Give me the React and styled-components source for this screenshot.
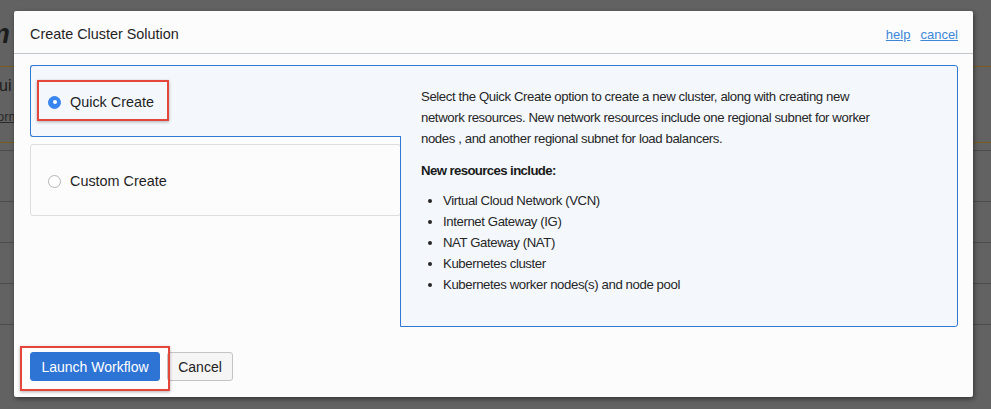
import React from "react";
import styled, { createGlobalStyle } from "styled-components";

const GlobalStyle = createGlobalStyle`
  html, body {
    margin: 0;
    padding: 0;
    background: #626262;
  }
  body {
    font-family: "Liberation Sans", Arial, Helvetica, sans-serif;
  }
`;

const Backdrop = styled.div`
  position: relative;
  width: 991px;
  height: 409px;
  overflow: hidden;
  background: #626262;
`;

/* the page underneath the overlay */
const PageTop = styled.div`
  height: 66px;
  border-bottom: 1px solid #7a5b1f;
  display: flex;
  align-items: center;
`;

const PageTitle = styled.span`
  margin-left: -15px;
  margin-top: 2px;
  font-size: 28px;
  font-weight: bold;
  font-style: italic;
  color: #1c1c1c;
`;

const PageIntro = styled.div`
  height: 76px;
  border-bottom: 1px solid #7a5b1f;
  display: flex;
  flex-direction: column;
  padding-top: 10px;
  box-sizing: border-box;
`;

const IntroHeading = styled.span`
  font-size: 16px;
  color: #1c1c1c;
  line-height: 18px;
  margin-left: -1px;
`;

const IntroLink = styled.span`
  margin-top: 14px;
  margin-left: -3px;
  font-size: 13px;
  color: #2a2a2a;
  text-decoration: underline;
`;

const PageRow = styled.div`
  height: ${({ $h }) => $h}px;
  border-bottom: 1px solid #4d4d4d;
`;

/* modal */
const Modal = styled.div`
  position: absolute;
  top: 11px;
  left: 14px;
  width: 959px;
  height: 386px;
  background: #fcfcfc;
  border-radius: 2px;
  box-shadow: 1px 2px 5px rgba(0, 0, 0, 0.45);
  display: flex;
  flex-direction: column;
`;

const Header = styled.div`
  height: 38px;
  border-bottom: 1px solid #c0c6cb;
  display: flex;
  align-items: center;
  justify-content: space-between;
  padding: 4px 15px 0 16px;
  box-sizing: content-box;
`;

const Title = styled.h2`
  margin: 0;
  font-size: 14.4px;
  font-weight: normal;
  color: #1f1f1f;
`;

const HeaderLinks = styled.div`
  display: flex;
  gap: 10px;
`;

const Link = styled.a`
  font-size: 13px;
  color: #3d86d8;
  text-decoration: underline;
  cursor: pointer;
`;

const Body = styled.div`
  display: flex;
  padding: 11px 15px 0 16px;
`;

const Options = styled.div`
  width: 371px;
  flex: none;
  display: flex;
  flex-direction: column;
  gap: 7px;
`;

const OptionCard = styled.div`
  position: relative;
  z-index: ${({ $selected }) => ($selected ? 2 : 0)};
  height: 72px;
  box-sizing: border-box;
  display: flex;
  align-items: center;
  padding: 2px 0 0 17px;
  background: ${({ $selected }) => ($selected ? "#f4f8fd" : "#fcfcfc")};
  border: 1px solid ${({ $selected }) => ($selected ? "#2f78d4" : "#dedede")};
  border-right: ${({ $selected }) => ($selected ? "none" : "1px solid #dedede")};
  border-radius: ${({ $selected }) => ($selected ? "3px 0 0 3px" : "3px")};
`;

const OptionLabel = styled.label`
  position: relative;
  display: inline-flex;
  align-items: center;
  gap: 9px;
  font-size: 14.4px;
  color: #1f1f1f;
  line-height: 17px;
`;

const Radio = styled.span`
  width: 13px;
  height: 13px;
  box-sizing: border-box;
  border-radius: 50%;
  display: flex;
  align-items: center;
  justify-content: center;
  background: ${({ $checked }) => ($checked ? "#3a86f0" : "#ffffff")};
  border: 1px solid ${({ $checked }) => ($checked ? "#3a86f0" : "#b4b4b4")};

  &::after {
    content: "";
    width: 4px;
    height: 4px;
    border-radius: 50%;
    background: #fff;
    display: ${({ $checked }) => ($checked ? "block" : "none")};
  }
`;

const Highlight = styled.span`
  position: absolute;
  top: ${({ $t }) => $t}px;
  left: ${({ $l }) => $l}px;
  right: ${({ $r }) => $r}px;
  bottom: ${({ $b }) => $b}px;
  border: 2px solid #e5463c;
  box-shadow: 0 1px 3px rgba(0, 0, 0, 0.3);
  pointer-events: none;
`;

const Panel = styled.div`
  position: relative;
  z-index: 1;
  flex: 1;
  margin-left: -1px;
  height: 262px;
  box-sizing: border-box;
  background: #f4f8fd;
  border: 1px solid #2f78d4;
  border-radius: 0 3px 3px 0;
  padding: 20px 20px 0 20px;
  font-size: 13.2px;
  letter-spacing: -0.4px;
  line-height: 21px;
  color: #262626;
`;

const Description = styled.p`
  margin: 0 0 11px;
  max-width: 462px;
`;

const ListHeading = styled.div`
  font-weight: bold;
  letter-spacing: -0.6px;
  color: #1a1a1a;
`;

const ResourceList = styled.ul`
  margin: 9px 0 0;
  padding-left: 22px;
`;

const Footer = styled.div`
  display: flex;
  gap: 7px;
  padding: 25px 0 0 16px;
`;

const ButtonWrap = styled.div`
  position: relative;
  display: flex;
`;

const Button = styled.button`
  height: 29px;
  width: ${({ $w }) => $w}px;
  box-sizing: border-box;
  border-radius: 3px;
  font-family: inherit;
  font-size: 14px;
  cursor: pointer;
  padding: 0;
  background: ${({ $primary }) => ($primary ? "#2d74d5" : "#f5f5f5")};
  color: ${({ $primary }) => ($primary ? "#ffffff" : "#222222")};
  border: 1px solid ${({ $primary }) => ($primary ? "#2d74d5" : "#c4c4c4")};
`;

const resources = [
  "Virtual Cloud Network (VCN)",
  "Internet Gateway (IG)",
  "NAT Gateway (NAT)",
  "Kubernetes cluster",
  "Kubernetes worker nodes(s) and node pool",
];

export default function App() {
  return (
    <Backdrop>
      <GlobalStyle />
      <PageTop>
        <PageTitle>m</PageTitle>
      </PageTop>
      <PageIntro>
        <IntroHeading>ui</IntroHeading>
        <IntroLink>orm</IntroLink>
      </PageIntro>
      <PageRow $h={7} />
      <PageRow $h={50} />
      <PageRow $h={40} />
      <PageRow $h={40} />
      <PageRow $h={40} />

      <Modal>
        <Header>
          <Title>Create Cluster Solution</Title>
          <HeaderLinks>
            <Link>help</Link>
            <Link>cancel</Link>
          </HeaderLinks>
        </Header>

        <Body>
          <Options>
            <OptionCard $selected>
              <OptionLabel>
                <Radio $checked />
                Quick Create
                <Highlight $t={-14} $l={-11} $r={-15} $b={-10} />
              </OptionLabel>
            </OptionCard>
            <OptionCard>
              <OptionLabel>
                <Radio />
                Custom Create
              </OptionLabel>
            </OptionCard>
          </Options>

          <Panel>
            <Description>
              Select the Quick Create option to create a new cluster, along with
              creating new network resources. New network resources include one
              regional subnet for worker nodes , and another regional subnet for
              load balancers.
            </Description>
            <ListHeading>New resources include:</ListHeading>
            <ResourceList>
              {resources.map((item) => (
                <li key={item}>{item}</li>
              ))}
            </ResourceList>
          </Panel>
        </Body>

        <Footer>
          <ButtonWrap>
            <Button $primary $w={130}>Launch Workflow</Button>
            <Highlight $t={-6} $l={-10} $r={-10} $b={-10} />
          </ButtonWrap>
          <Button $w={66}>Cancel</Button>
        </Footer>
      </Modal>
    </Backdrop>
  );
}
